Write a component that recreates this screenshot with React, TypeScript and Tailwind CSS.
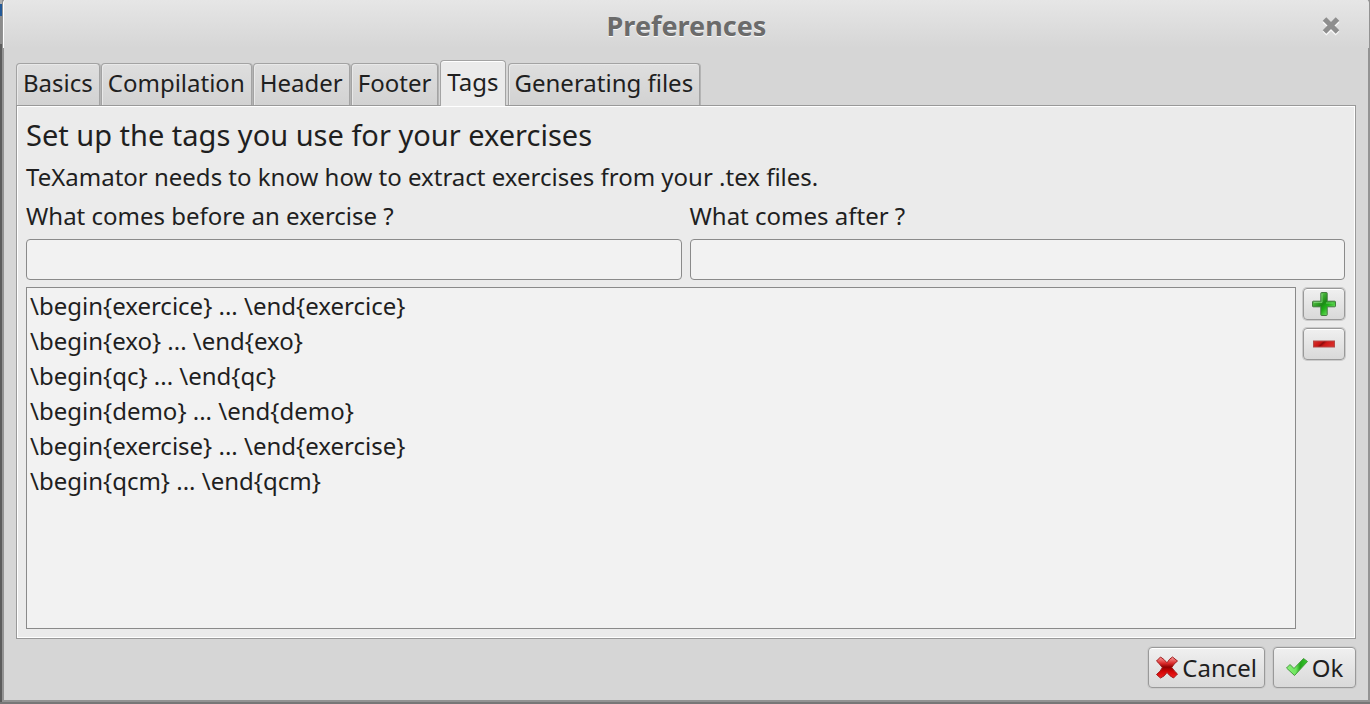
import React, { useState } from "react";

const tabs = ["Basics", "Compilation", "Header", "Footer", "Tags", "Generating files"];

const tags = ["exercice", "exo", "qc", "demo", "exercise", "qcm"];

const buttonStyle =
  "flex items-center justify-center rounded-[4px] border border-[#999] bg-linear-to-b from-[#f0f0f0] to-[#d9d9d9] shadow-[inset_0_1px_0_#fff,0_0_0_1px_#cbcbcb]";

const inputStyle = "mt-1 h-[41px] rounded-[4px] border border-[#8a8a8a] bg-[#f2f2f2] px-2 outline-none";

function CloseIcon() {
  return (
    <svg width="20" height="22" viewBox="0 0 20 22" aria-hidden="true">
      <path d="M3.5 5.5 L16.5 18.5 M16.5 5.5 L3.5 18.5" stroke="#fafafa" strokeWidth="5.4" />
      <path d="M3.5 4 L16.5 17 M16.5 4 L3.5 17" stroke="#8e8e8e" strokeWidth="5" />
    </svg>
  );
}

function PlusIcon() {
  return (
    <svg width="24" height="24" viewBox="0 0 24 24" aria-hidden="true">
      <defs>
        <linearGradient id="plusFill" x1="0" y1="0" x2="1" y2="1">
          <stop offset="0.1" stopColor="#8fd985" />
          <stop offset="0.3" stopColor="#3fae33" />
          <stop offset="0.47" stopColor="#1d8a16" />
          <stop offset="0.6" stopColor="#1fb016" />
          <stop offset="0.85" stopColor="#7be36e" />
        </linearGradient>
      </defs>
      <path
        d="M9.5 0.5h5q.7 0 .7.7v8h7.6q.7 0 .7.7v4.2q0 .7-.7.7h-7.6v8q0 .7-.7.7h-5q-.7 0-.7-.7v-8H1.2q-.7 0-.7-.7V9.9q0-.7.7-.7h7.6v-8q0-.7.7-.7z"
        fill="url(#plusFill)"
        stroke="#447a40"
      />
      <path d="M10 2v8.4H2M14 11h7.5" fill="none" stroke="#a2e69a" strokeOpacity="0.6" />
    </svg>
  );
}

function MinusIcon() {
  return (
    <svg width="24" height="24" viewBox="0 0 24 24" aria-hidden="true">
      <defs>
        <linearGradient id="minusFill" x1="0" y1="0" x2="1" y2="0.3">
          <stop offset="0" stopColor="#d8342c" />
          <stop offset="0.4" stopColor="#c91414" />
          <stop offset="0.5" stopColor="#8e0b0b" />
          <stop offset="0.65" stopColor="#d01818" />
          <stop offset="1" stopColor="#d72c28" />
        </linearGradient>
      </defs>
      <rect x="1.5" y="9" width="21" height="6" fill="url(#minusFill)" stroke="#b34a48" />
    </svg>
  );
}

function CrossIcon() {
  return (
    <svg width="24" height="24" viewBox="0 0 24 24" aria-hidden="true">
      <defs>
        <linearGradient id="crossFill" x1="0" y1="0" x2="0" y2="1">
          <stop offset="0" stopColor="#f9a0a0" />
          <stop offset="0.3" stopColor="#dc2a2a" />
          <stop offset="0.48" stopColor="#8f0000" />
          <stop offset="0.68" stopColor="#d00404" />
          <stop offset="1" stopColor="#f42020" />
        </linearGradient>
      </defs>
      <path
        d="M5.5 1 Q9 3 12 6.8 Q14.500 2.500 17.500 1 L22.500 5 Q18.500 8 16.800 11.500 Q19.500 15.500 22.500 18 L18.500 22 Q14.500 20 12 16.500 Q9.500 20.500 5.500 22 L1.500 18.500 Q5.500 15.500 7.300 11.700 Q5 8 1.500 5z"
        fill="url(#crossFill)"
        stroke="#a01c1c"
        strokeLinejoin="round"
      />
    </svg>
  );
}

function CheckIcon() {
  return (
    <svg width="24" height="24" viewBox="0 0 24 24" aria-hidden="true">
      <defs>
        <linearGradient id="checkFill" x1="0" y1="0" x2="1" y2="0">
          <stop offset="0" stopColor="#8cf07c" />
          <stop offset="0.45" stopColor="#6ee65e" />
          <stop offset="0.65" stopColor="#22a51a" />
          <stop offset="1" stopColor="#3ccb30" />
        </linearGradient>
      </defs>
      <path
        d="M1.500 12 5 8.500 9 12.500 18.500 2.500 22.500 5.500 9.500 19.500z"
        fill="url(#checkFill)"
        stroke="#469a3e"
        strokeLinejoin="round"
      />
    </svg>
  );
}

export default function App() {
  const [active, setActive] = useState("Tags");

  return (
    <div className="flex min-h-screen border-b-2 border-[#777] bg-[#939393] font-['Noto_Sans',sans-serif] text-2xl text-[#1f1f1f]">
      <div className="flex w-[2px] flex-col bg-[#5c5c5c]">
        <div className="h-1 bg-[#b0b0b0]" />
        <div className="h-3 bg-[#245a98]" />
        <div className="h-7 bg-[#8c8c8c]" />
      </div>
      <main className="mx-[2px] mb-[2px] flex grow flex-col bg-[#d6d6d6]">
        <header className="-mx-px grid h-12 grid-cols-[1fr_auto_1fr] items-center rounded-t-[3px] border-l border-white bg-linear-to-b from-[#e6e6e6] to-[#d6d6d6] px-7 pt-1">
          <h1 className="col-start-2 text-[27px] leading-9 font-bold text-[#6b6b6b] [text-shadow:0_1px_0_#fafafa]">
            Preferences
          </h1>
          <button type="button" aria-label="Close" className="justify-self-end">
            <CloseIcon />
          </button>
        </header>

        <div className="flex grow flex-col px-3 pt-3 pb-3">
          <div role="tablist" className="flex items-end gap-px">
            {tabs.map((tab) => (
              <button
                key={tab}
                type="button"
                role="tab"
                aria-selected={tab === active}
                onClick={() => setActive(tab)}
                className={
                  tab === active
                    ? "z-10 mx-px -mb-px h-[46px] rounded-t-[4px] border border-b-0 border-[#a3a3a3] bg-[#ebebeb] px-[6px] pb-1 shadow-[inset_0_1px_0_#fff]"
                    : "h-[42px] rounded-t-[4px] border border-b-0 border-[#a3a3a3] bg-linear-to-b from-[#dedede] to-[#d2d2d2] px-[6px] pb-1 shadow-[inset_1px_1px_0_#e9e9e9,1px_0_0_#b4b4b4]"
                }
              >
                {tab}
              </button>
            ))}
          </div>

          <section
            role="tabpanel"
            className="flex grow flex-col border border-[#999] bg-[#ebebeb] py-[9px] pr-[10px] pl-[9px] shadow-[inset_0_0_0_1px_#fff]"
          >
            <h2 className="text-[29px] leading-10">Set up the tags you use for your exercises</h2>
            <p className="mt-[2px] leading-10">TeXamator needs to know how to extract exercises from your .tex files.</p>

            <div className="grid grid-cols-2 gap-2">
              <div className="flex flex-col">
                <label htmlFor="before" className="leading-[38px]">
                  What comes before an exercise ?
                </label>
                <input id="before" type="text" className={inputStyle} />
              </div>
              <div className="flex flex-col">
                <label htmlFor="after" className="leading-[38px]">
                  What comes after ?
                </label>
                <input id="after" type="text" className={inputStyle} />
              </div>
            </div>

            <div className="mt-[7px] flex grow gap-[7px]">
              <ul role="listbox" aria-label="Tags" className="grow border border-[#8a8a8a] bg-[#f2f2f2] px-[3px]">
                {tags.map((tag) => (
                  <li key={tag} role="option" aria-selected="false" className="leading-[35px]">
                    {`\\begin{${tag}} ... \\end{${tag}}`}
                  </li>
                ))}
              </ul>
              <div className="flex w-[42px] flex-col gap-2 pt-px">
                <button type="button" aria-label="Add tag" className={`${buttonStyle} h-8`}>
                  <PlusIcon />
                </button>
                <button type="button" aria-label="Remove tag" className={`${buttonStyle} h-8`}>
                  <MinusIcon />
                </button>
              </div>
            </div>
          </section>

          <footer className="mt-2 flex justify-end gap-2">
            <button type="button" className={`${buttonStyle} h-[41px] gap-[3px] pr-[7px] pl-[6px]`}>
              <CrossIcon />
              Cancel
            </button>
            <button type="button" className={`${buttonStyle} h-[41px] min-w-[83px] gap-[3px] pr-[7px] pl-[6px]`}>
              <CheckIcon />
              Ok
            </button>
          </footer>
        </div>
      </main>
    </div>
  );
}
